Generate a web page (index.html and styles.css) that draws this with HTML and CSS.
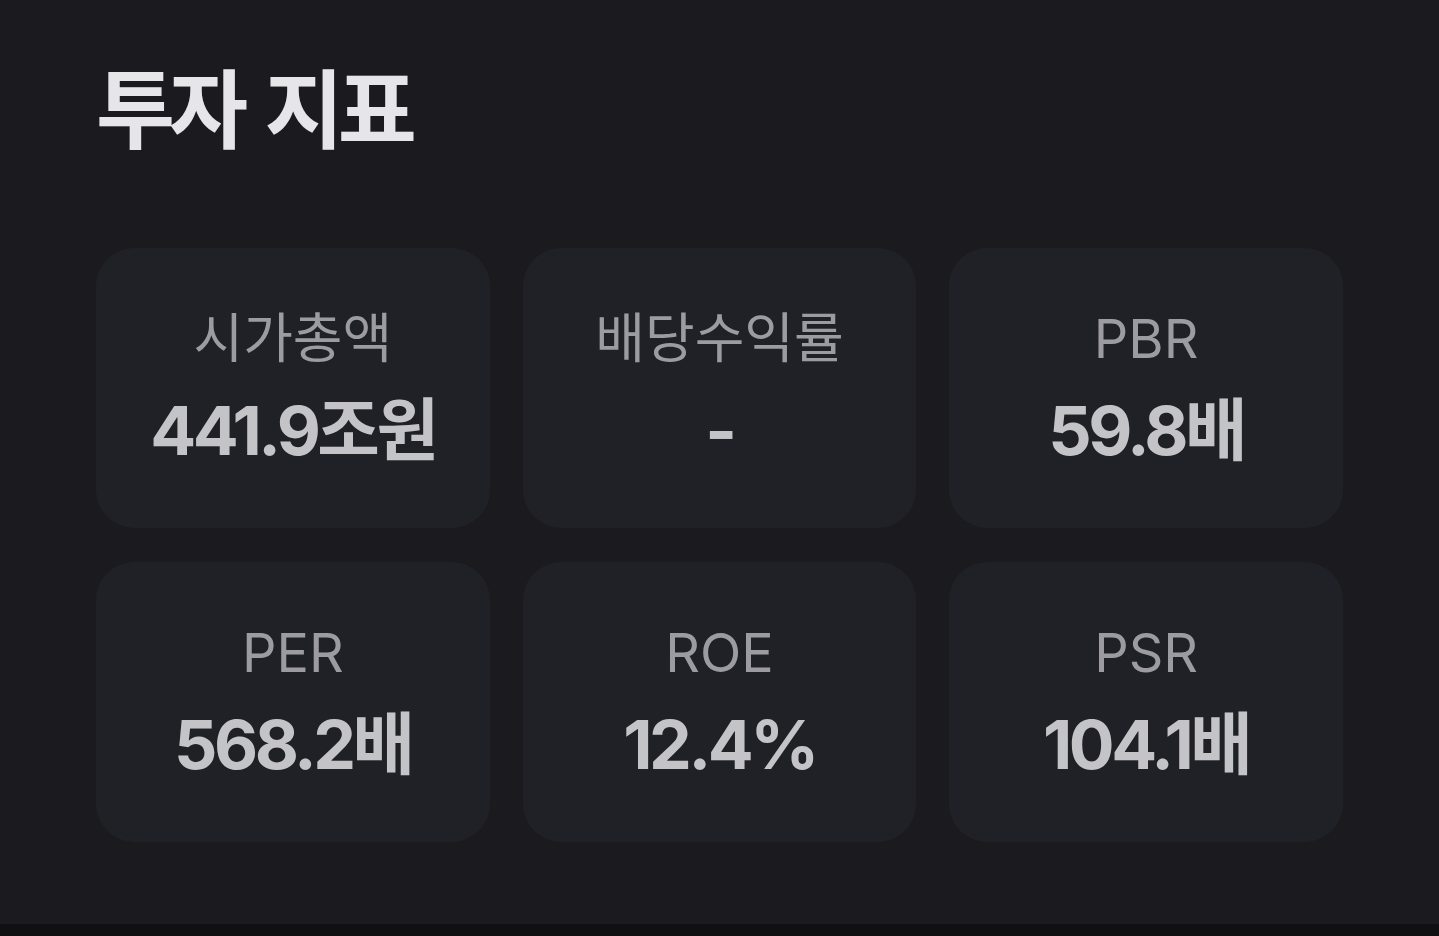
FILE: index.html
```html
<!DOCTYPE html>
<html lang="ko">
<head>
<meta charset="utf-8">
<title>투자 지표</title>
<link rel="stylesheet" href="styles.css">
</head>
<body>
<section class="panel">
  <h2 class="title">투자 지표</h2>
  <div class="grid">
    <div class="card"><div class="label">시가총액</div><div class="value">441.9조원</div></div>
    <div class="card"><div class="label">배당수익률</div><div class="value">-</div></div>
    <div class="card"><div class="label">PBR</div><div class="value">59.8배</div></div>
    <div class="card"><div class="label">PER</div><div class="value">568.2배</div></div>
    <div class="card"><div class="label">ROE</div><div class="value">12.4%</div></div>
    <div class="card"><div class="label">PSR</div><div class="value">104.1배</div></div>
  </div>
</section>
</body>
</html>
```
FILE: styles.css
```css
html, body {
  margin: 0;
  padding: 0;
  background: #101012;
}
body {
  font-family: Inter, "Noto Sans CJK KR", sans-serif;
}
.panel {
  background: #1a1a1f;
  height: 924px;
  box-sizing: border-box;
  padding: 56px 96px 0 96px;
}
.title {
  margin: 0;
  font-family: Inter, "Noto Sans CJK KR", sans-serif;
  font-size: 86px;
  line-height: 110px;
  font-weight: 700;
  color: #e6e6e8;
  letter-spacing: -6px;
  word-spacing: 8px;
}
.grid {
  margin-top: 82px;
  width: 1247px;
  display: grid;
  grid-template-columns: repeat(3, 1fr);
  column-gap: 33px;
  row-gap: 34px;
}
.card {
  background: #202126;
  border-radius: 38px;
  height: 280px;
  display: flex;
  flex-direction: column;
  align-items: center;
  justify-content: center;
  gap: 18px;
}
.label {
  font-size: 54px;
  line-height: 66px;
  color: #9b9ba1;
  font-weight: 400;
}
.value {
  font-size: 68px;
  line-height: 80px;
  font-weight: 700;
  color: #c4c4c8;
  letter-spacing: -3.5px;
}
```
